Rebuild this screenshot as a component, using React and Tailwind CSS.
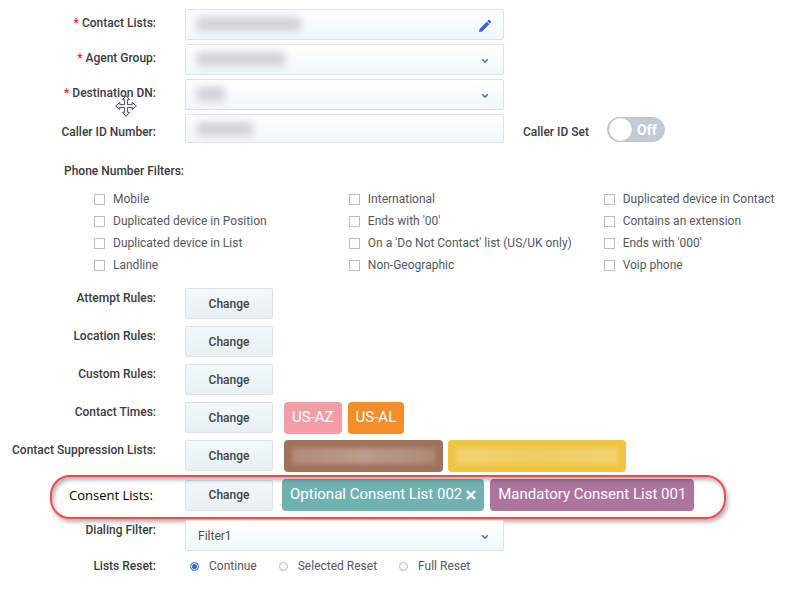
import React, { useState } from 'react';
import clsx from 'clsx';

const FILTERS = [
  'Mobile',
  'International',
  'Duplicated device in Contact',
  'Duplicated device in Position',
  "Ends with '00'",
  'Contains an extension',
  'Duplicated device in List',
  "On a 'Do Not Contact' list (US/UK only)",
  "Ends with '000'",
  'Landline',
  'Non-Geographic',
  'Voip phone',
];

const RESET_OPTIONS = ['Continue', 'Selected Reset', 'Full Reset'];

const boxClass =
  'block w-full rounded-xs border border-[#dfe0ea] bg-linear-to-b from-white to-[#f0f8f9] pl-3 text-xs text-[#4a4d55] outline-none';

function Label({ htmlFor, required, className, children }) {
  return (
    <label htmlFor={htmlFor} className={clsx('w-39 shrink-0 text-right leading-4 font-medium', className)}>
      {required && <span className="text-[#ff2020]">* </span>}
      {children}
    </label>
  );
}

function Chevron() {
  return (
    <svg viewBox="0 0 8 6" className="pointer-events-none absolute top-3.5 right-[15px] h-1.5 w-2" fill="none" stroke="#3f6fe0" strokeWidth="1.6">
      <path d="M1.2 1.2 4 4.2 6.8 1.2" />
    </svg>
  );
}

// hidden value, drawn as a soft gray smear
function Masked({ className }) {
  return <span className={clsx('pointer-events-none absolute left-3 bg-[#d2d0d4] blur-[4px]', className)} />;
}

function SelectBox({ id, children, mask }) {
  return (
    <div className="relative max-w-[319px] flex-1">
      <select id={id} className={clsx(boxClass, 'h-[31px] appearance-none')}>
        {children}
      </select>
      {mask}
      <Chevron />
    </div>
  );
}

function ChangeButton({ label }) {
  return (
    <button
      type="button"
      aria-label={`Change ${label}`}
      className="h-[31px] w-22 shrink-0 rounded-xs border border-[#dfe0ea] bg-linear-to-b from-[#f1f9f9] to-[#e9f0f3] font-medium text-[#40434c]"
    >
      Change
    </button>
  );
}

function Tag({ className, children }) {
  return (
    <span className={clsx('flex h-8 items-center rounded-sm px-2 text-[15px] whitespace-nowrap text-white', className)}>
      {children}
    </span>
  );
}

function RuleRow({ label, children }) {
  return (
    <div className="flex min-h-8 items-start gap-[29px]">
      <span className="w-39 shrink-0 pt-0.5 text-right leading-4 font-medium whitespace-nowrap">{label}:</span>
      <div className="flex gap-[11px]">
        <ChangeButton label={label} />
        {children}
      </div>
    </div>
  );
}

function MoveCursor() {
  return (
    <svg viewBox="0 0 22 22" className="pointer-events-none absolute top-4 right-[19px] size-[22px]" fill="#fff" stroke="#4b4f5a" strokeWidth="1" strokeLinejoin="round">
      <path d="M11 .6 14.6 4.8H12.4V9.6H17.2V7.4L21.4 11 17.2 14.6V12.4H12.4V17.2H14.6L11 21.4 7.4 17.2H9.6V12.4H4.8V14.6L.6 11 4.8 7.4V9.6H9.6V4.8H7.4Z" />
    </svg>
  );
}

export default function App() {
  const [callerIdSet, setCallerIdSet] = useState(false);
  const [checked, setChecked] = useState([]);
  const [reset, setReset] = useState('Continue');

  const toggleFilter = (name) => {
    setChecked(checked.includes(name) ? checked.filter((c) => c !== name) : [...checked, name]);
  };

  return (
    <form className="min-h-screen bg-white pt-[9px] font-['Roboto',sans-serif] text-xs text-[#3b3b3f]">
      <div className="flex flex-col gap-1">
        <div className="flex gap-[29px]">
          <Label htmlFor="contact-lists" required className="pt-1.5">Contact Lists:</Label>
          <div className="relative max-w-[319px] flex-1">
            <input id="contact-lists" type="text" readOnly className={clsx(boxClass, 'h-[31px]')} />
            <Masked className="top-2 h-3.5 w-26" />
            <button type="button" aria-label="Edit contact lists" className="absolute top-2.5 right-3">
              <svg viewBox="0 0 14 14" className="size-3.5" fill="#2f66df">
                <path d="M1 13 1.6 9.9 8.8 2.7 11.3 5.2 4.1 12.4ZM9.3 2.2 10.4 1.1Q11 .6 11.6 1.1L12.9 2.4Q13.4 3 12.9 3.6L11.8 4.7Z" />
              </svg>
            </button>
          </div>
        </div>
        <div className="flex gap-[29px]">
          <Label htmlFor="agent-group" required className="pt-1.5">Agent Group:</Label>
          <SelectBox id="agent-group" mask={<Masked className="top-2 h-3.5 w-22" />} />
        </div>
        <div className="flex gap-[29px]">
          <Label htmlFor="destination-dn" required className="relative pt-1.5">
            Destination DN:
            <MoveCursor />
          </Label>
          <SelectBox id="destination-dn" mask={<Masked className="top-2 h-3.5 w-7" />} />
        </div>
        <div className="flex gap-[29px]">
          <Label htmlFor="caller-id" className="pt-2.5">Caller ID Number:</Label>
          <div className="flex flex-1 gap-[19px]">
            <div className="relative max-w-[319px] flex-1">
              <input id="caller-id" type="text" className={clsx(boxClass, 'h-[29px]')} />
              <Masked className="top-2 h-3.5 w-14" />
            </div>
            <label className="flex shrink-0 cursor-pointer gap-[18px]">
              <span className="pt-2.5 leading-4 font-medium">Caller ID Set</span>
              <input
                type="checkbox"
                role="switch"
                checked={callerIdSet}
                onChange={(e) => setCallerIdSet(e.target.checked)}
                className="peer sr-only"
              />
              <span className="mt-[3px] flex h-[25px] w-[58px] items-center gap-1 rounded-full border border-[#bcc6d0] bg-[#c2cbd4] text-sm font-bold text-white peer-checked:flex-row-reverse">
                <span className="size-[25px] shrink-0 rounded-full bg-white bg-clip-padding border border-[#bcc6d0]" />
                {callerIdSet ? 'On' : 'Off'}
              </span>
            </label>
          </div>
        </div>
      </div>

      <fieldset className="mt-5">
        <legend className="pl-16 leading-4 font-medium">Phone Number Filters:</legend>
        <div className="mt-[9px] mr-0.5 ml-[94px] grid grid-cols-[11fr_11fr_8fr]">
          {FILTERS.map((name) => (
            <label key={name} className="flex h-[22px] items-center gap-2 whitespace-nowrap text-[#55585f]">
              <input
                type="checkbox"
                checked={checked.includes(name)}
                onChange={() => toggleFilter(name)}
                className="size-[11px] shrink-0 appearance-none border border-[#b4bfce] bg-white checked:bg-[#2f66df]"
              />
              {name}
            </label>
          ))}
        </div>
      </fieldset>

      <div className="mt-3 flex flex-col gap-1.5">
        <RuleRow label="Attempt Rules" />
        <RuleRow label="Location Rules" />
        <RuleRow label="Custom Rules" />
        <RuleRow label="Contact Times">
          <div className="flex gap-1.5">
            <Tag className="bg-[#f59ca9]">US-AZ</Tag>
            <Tag className="bg-[#f58d28]">US-AL</Tag>
          </div>
        </RuleRow>
        <RuleRow label="Contact Suppression Lists">
          <div className="flex gap-[5px]">
            <Tag className="w-[159px] bg-[#a0725a]">
              <span className="h-4 w-full bg-linear-to-r from-[#b08b79] via-[#bc9c8c] to-[#ae8976] blur-[2px]" />
            </Tag>
            <Tag className="w-[178px] bg-[#efc544]">
              <span className="h-4 w-full bg-linear-to-r from-[#f1d270] via-[#eece62] to-[#f1d270] blur-[2px]" />
            </Tag>
          </div>
        </RuleRow>
      </div>

      {/* highlighted row */}
      <div className="relative mt-[3px] ml-[50px] flex h-11 w-fit items-center pr-8 pb-1">
        <span className="w-[135px] pt-0.5 pl-[19px] font-['Open_Sans',sans-serif] text-[13px] font-medium text-black">Consent Lists:</span>
        <div className="flex items-center gap-[9px]">
          <ChangeButton label="Consent Lists" />
          <div className="flex gap-1.5">
            <Tag className="bg-[#70b2b0]">
              Optional Consent List 002
              <button type="button" aria-label="Remove Optional Consent List 002" className="ml-1">
                <svg viewBox="0 0 10 10" className="size-2.5" stroke="#fff" strokeWidth="2.4">
                  <path d="M1 1 9 9M9 1 1 9" />
                </svg>
              </button>
            </Tag>
            <Tag className="bg-[#ad749d]">Mandatory Consent List 001</Tag>
          </div>
        </div>
        <div className="pointer-events-none absolute inset-0 rounded-[20px] border-2 border-[#f8474a] shadow-[2px_3px_4px_rgba(0,0,0,0.3),inset_2px_3px_4px_rgba(0,0,0,0.3)]" />
      </div>

      <div className="mt-px flex gap-[29px]">
        <Label htmlFor="dialing-filter" className="pt-0.5">Dialing Filter:</Label>
        <SelectBox id="dialing-filter">
          <option>Filter1</option>
        </SelectBox>
      </div>

      <div role="radiogroup" aria-labelledby="lists-reset" className="mt-[7px] flex gap-[34px] leading-4">
        <span id="lists-reset" className="w-39 shrink-0 text-right font-medium">Lists Reset:</span>
        <div className="flex gap-[22px]">
          {RESET_OPTIONS.map((option) => (
            <label key={option} className="flex items-center gap-2.5 text-[#55585f]">
              <input
                type="radio"
                name="lists-reset"
                checked={reset === option}
                onChange={() => setReset(option)}
                className="size-[9px] shrink-0 appearance-none rounded-full border border-[#aab6c8] bg-white checked:border-[#4a78e6] checked:bg-[#2f66df] checked:shadow-[inset_0_0_0_1px_#fff]"
              />
              {option}
            </label>
          ))}
        </div>
      </div>
    </form>
  );
}
